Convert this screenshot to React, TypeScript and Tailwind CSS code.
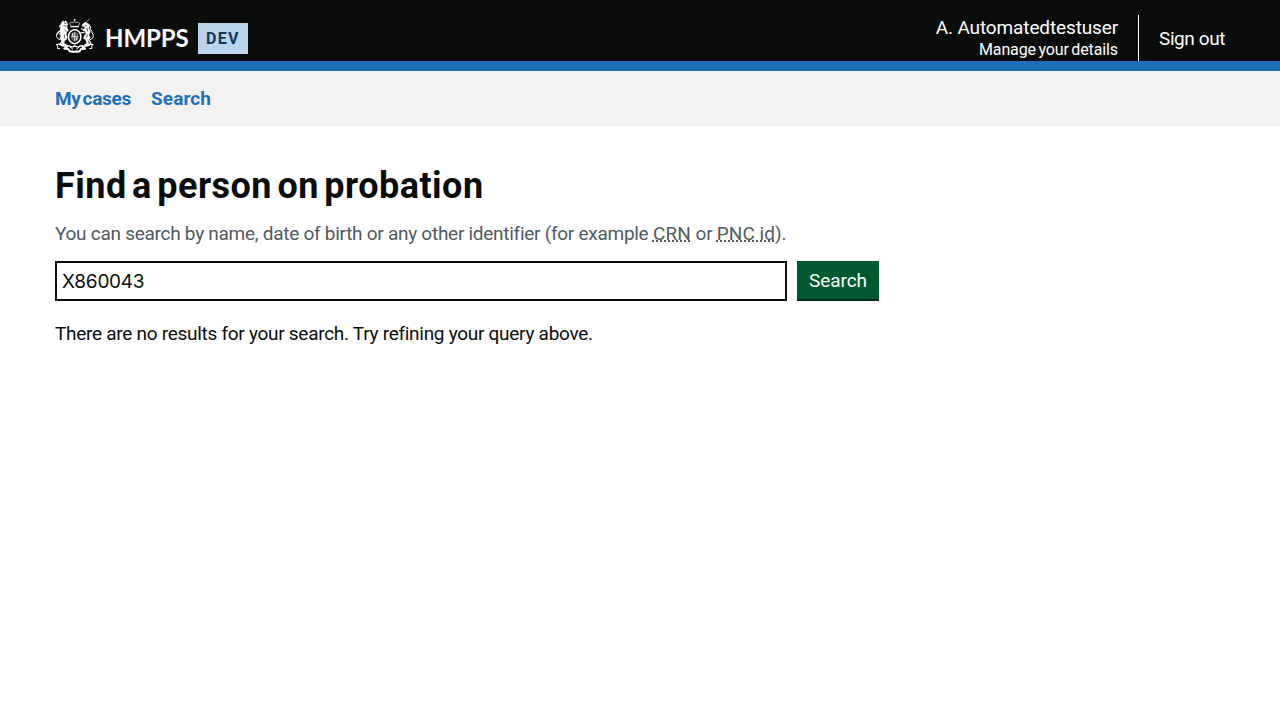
function Crest() {
  return (
    <svg className="block h-[35px] w-10 shrink-0" viewBox="0 0 120 105" fill="none" stroke="#fff" strokeLinecap="round" strokeLinejoin="round" aria-hidden="true">
      {/* Crown */}
      <path d="M59 3v7M56 6h6" strokeWidth="2" />
      <path d="M48 24l-4-8q3-5 8-3 4 2 7-2 3 4 7 2 5-2 8 3l-4 8z" strokeWidth="2" />
      <path d="M48 26h22" strokeWidth="3.5" />
      {/* Garter and shield */}
      <ellipse cx="59" cy="56" rx="18.5" ry="21" strokeWidth="4.5" />
      <ellipse cx="59" cy="56" rx="12" ry="14" fill="#fff" fillOpacity=".35" stroke="none" />
      <path d="M59 43v26M49 56h20" strokeWidth="2" />
      <path d="M53 47v6M65 60v6" strokeWidth="3" />
      {/* Lion */}
      <path d="M19 14l5-6 4 3 5-3 3 6 3 4-3 5 1 8 4 6-5 4-2 9 3 7-2 7-6 4-2 8 9 4-3 4-13-2 1-12-6-8 2-11-3-9 2-10z" fill="#fff" strokeWidth="1" />
      <path d="M23 30l-9-4 2-5M23 40l-12 0M25 51l-11-3M24 65l-8 12 7 5" strokeWidth="3.5" />
      <path d="M14 65q-11-4-9-15t6-8M5 49l5-3" strokeWidth="3" />
      <path d="M28 15l5 2M27 23l6 1M29 36l5 5M29 51l-1 9" stroke="#0b0c0c" strokeWidth="2" />
      {/* Unicorn */}
      <path d="M93 14l10-11" strokeWidth="1.8" />
      <path d="M82 19l8-6 8 3 6 8-3 7 5 8-4 12 4 8-7 10 4 13-12 2-4-3 8-5-3-10-6-4 1-8 6-6-3-8-6-2 5-9-1-4-6 1z" fill="#fff" strokeWidth="1" />
      <path d="M88 36l-9-4M87 44l-9 0M101 65l7 12-7 6" strokeWidth="3.5" />
      <path d="M106 65q11-4 8-15t-6-9M101 18l6 9-2 7 6 5" strokeWidth="3" />
      <path d="M91 22l4 2M96 31l2 8M97 50l-2 7" stroke="#0b0c0c" strokeWidth="2" />
      {/* Compartment and motto */}
      <path d="M5 80q7-4 13 1t13 3q8-3 14 1 8 4 14-2 6 6 14 2 6-4 14-1 8 2 13-3t13-1" strokeWidth="4" />
      <path d="M5 80q6 4 2 11l7 1M113 80q-6 4-2 11l-7 1" strokeWidth="3" />
      <path d="M36 86l-8 6 12 1 4 7q15 3 30 0l4-7 12-1-8-6" strokeWidth="6" />
      <path d="M45 87l8 6M73 87l-8 6" strokeWidth="3" />
    </svg>
  );
}

export default function App() {
  return (
    <div className="min-h-screen bg-white font-['Roboto',sans-serif] text-[19px] leading-[25px] text-[#0b0c0c]">
      <header className="flex h-[71px] items-start justify-between border-b-10 border-[#1d70b8] bg-[#0b0c0c] px-[55px] text-white">
        <div className="flex items-start">
          <div className="pt-[18px]"><Crest /></div>
          <a className="mt-[22px] ml-2.5 w-[83px] font-['Lato',sans-serif] text-2xl leading-8 font-bold tracking-[-0.1px] whitespace-nowrap" href="#">HMPPS</a>
          <strong className="mt-[23px] ml-2.5 h-[31px] w-[50px] bg-[#bbd4ea] pl-2 text-base leading-[31px] font-bold tracking-[1.3px] text-[#0f385c]">DEV</strong>
        </div>
        <nav className="flex pt-[15px]">
          <a className="flex h-[46px] flex-col items-end border-r border-white pr-5 whitespace-nowrap" href="#">
            <span className="tracking-[-0.13px]">A. Automatedtestuser</span>
            <span className="text-base leading-5 tracking-[-0.12px] [word-spacing:-1.3px]">Manage your details</span>
          </a>
          <a className="w-[86px] pt-[11px] pl-5 tracking-[-0.4px] whitespace-nowrap" href="#">Sign out</a>
        </nav>
      </header>
      <nav className="flex h-[55px] gap-5 bg-[#f3f2f1] px-[55px] pt-[15px] font-bold text-[#1d70b8]">
        <a className="w-[76px] tracking-[-0.3px] whitespace-nowrap [word-spacing:-2.4px]" href="#">My cases</a>
        <a className="tracking-[0.1px]" href="#">Search</a>
      </nav>
      <main className="px-[55px] pt-10">
        <h1 className="text-4xl leading-10 font-bold tracking-[0.48px] [word-spacing:-4px]">Find a person on probation</h1>
        <p className="mt-[15px] text-[#505a5f] tracking-[-0.27px] whitespace-nowrap">
          You can search by name, date of birth or any other identifier (for example{" "}
          <abbr className="tracking-[0.2px] underline decoration-dotted" title="Case Reference Number">CRN</abbr> or{" "}
          <abbr className="tracking-[0.05px] underline decoration-dotted" title="Police National Computer">PNC id</abbr>).
        </p>
        <form className="mt-[15px] flex gap-2.5">
          <input className="h-10 w-[732px] border-2 border-[#0b0c0c] px-[5px] font-['Inter',sans-serif] text-[19px] tracking-[-0.25px] outline-none" aria-label="Search" defaultValue="X860043" />
          <button type="button" className="h-10 w-[82px] bg-[#005a30] pb-0.5 tracking-[-0.05px] text-white shadow-[inset_0_-2px_0_#002d18]">Search</button>
        </form>
        <p className="mt-5 tracking-[-0.28px]">There are no results for your search. Try refining your query above.</p>
      </main>
    </div>
  );
}
